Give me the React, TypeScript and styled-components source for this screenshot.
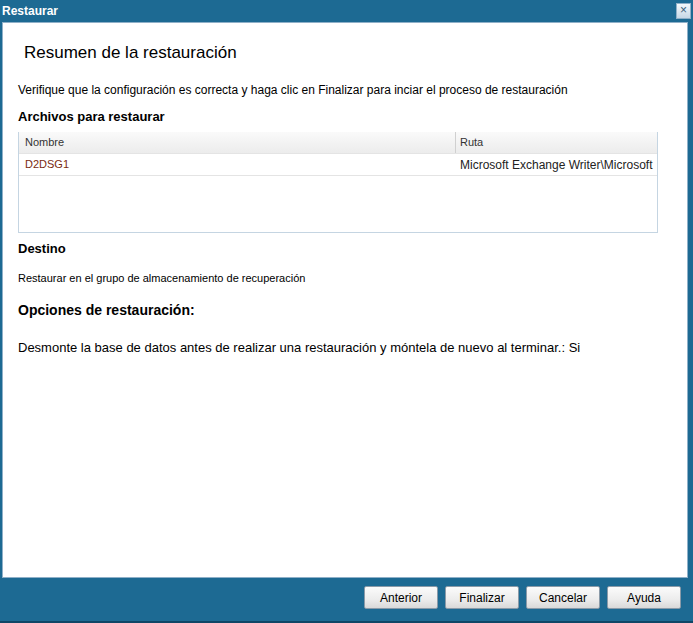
import React from "react";
import styled, { createGlobalStyle } from "styled-components";

const Global = createGlobalStyle`
  body { margin: 0; font-family: "Liberation Sans", Arial, sans-serif; }
`;

const Frame = styled.div`
  width: 693px;
  height: 623px;
  background: #1d6a93;
  display: flex;
  flex-direction: column;
  box-sizing: border-box;
  border-bottom: 2px solid #0f4666;
`;

const TitleBar = styled.div`
  height: 21px;
  display: flex;
  align-items: center;
  justify-content: space-between;
  padding: 0 2px 0 2px;
  color: #fff;
  font-weight: bold;
  font-size: 12px;
`;

const Close = styled.div`
  width: 13px;
  height: 14px;
  background: linear-gradient(#f4f8fb, #c7d8e6);
  border: 1px solid #8fb0c8;
  color: #3a5f7a;
  font-size: 12px;
  line-height: 13px;
  text-align: center;
  font-weight: normal;
`;

const Panel = styled.div`
  margin: 1px 5px 0 2px;
  height: 556px;
  background: #fff;
  border: 1px solid #8fb0c8;
  box-sizing: border-box;
  padding: 20px 0 0 15px;
  color: #000;
`;

const Heading = styled.h1`
  margin: 0 0 20px 6px;
  font-size: 17px;
  font-weight: normal;
`;

const Text = styled.p<{ $size?: number }>`
  margin: 0;
  font-size: ${(p) => p.$size ?? 12}px;
`;

const Section = styled.h2<{ $size?: number }>`
  margin: 0;
  font-size: ${(p) => p.$size ?? 13}px;
  font-weight: bold;
`;

const Table = styled.div`
  width: 638px;
  height: 100px;
  border: 1px solid #c5d5e2;
  border-top: none;
  margin: 8px 0 8px 0;
  font-size: 11px;
`;

const Row = styled.div<{ $head?: boolean }>`
  display: grid;
  grid-template-columns: 436px 1fr;
  height: 21px;
  border-bottom: 1px solid #e4e4e4;
  background: ${(p) => (p.$head ? "linear-gradient(#fafafa, #ececec)" : "#fff")};
  color: ${(p) => (p.$head ? "#333" : "#222")};
  & > div {
    padding: 4px 6px 0 6px;
    white-space: nowrap;
    overflow: hidden;
  }
  & > div + div {
    border-left: 1px solid ${(p) => (p.$head ? "#d0d0d0" : "transparent")};
    padding-left: 4px;
    font-size: ${(p) => (p.$head ? 11 : 12)}px;
  }
`;

const Footer = styled.div`
  display: flex;
  justify-content: flex-end;
  gap: 7px;
  padding: 8px 12px 0 0;
`;

const Button = styled.button`
  width: 74px;
  height: 23px;
  font-family: inherit;
  font-size: 12px;
  border: 1px solid #8a9aa8;
  border-radius: 2px;
  background: linear-gradient(#fbfbfb 0%, #ececec 60%, #d9d9d9 100%);
  color: #000;
`;

export default function App() {
  return (
    <>
      <Global />
      <Frame>
        <TitleBar>
          <span>Restaurar</span>
          <Close>×</Close>
        </TitleBar>
        <Panel>
          <Heading>Resumen de la restauración</Heading>
          <Text>
            Verifique que la configuración es correcta y haga clic en Finalizar para inciar el proceso de restauración
          </Text>
          <Section style={{ marginTop: 12 }}>Archivos para restaurar</Section>
          <Table>
            <Row $head>
              <div>Nombre</div>
              <div>Ruta</div>
            </Row>
            <Row>
              <div style={{ color: "#7a2a10" }}>D2DSG1</div>
              <div>Microsoft Exchange Writer\Microsoft</div>
            </Row>
          </Table>
          <Section>Destino</Section>
          <Text $size={11} style={{ marginTop: 16 }}>
            Restaurar en el grupo de almacenamiento de recuperación
          </Text>
          <Section $size={14} style={{ marginTop: 18 }}>Opciones de restauración:</Section>
          <Text $size={13} style={{ marginTop: 22 }}>
            Desmonte la base de datos antes de realizar una restauración y móntela de nuevo al terminar.: Si
          </Text>
        </Panel>
        <Footer>
          <Button>Anterior</Button>
          <Button>Finalizar</Button>
          <Button>Cancelar</Button>
          <Button>Ayuda</Button>
        </Footer>
      </Frame>
    </>
  );
}
